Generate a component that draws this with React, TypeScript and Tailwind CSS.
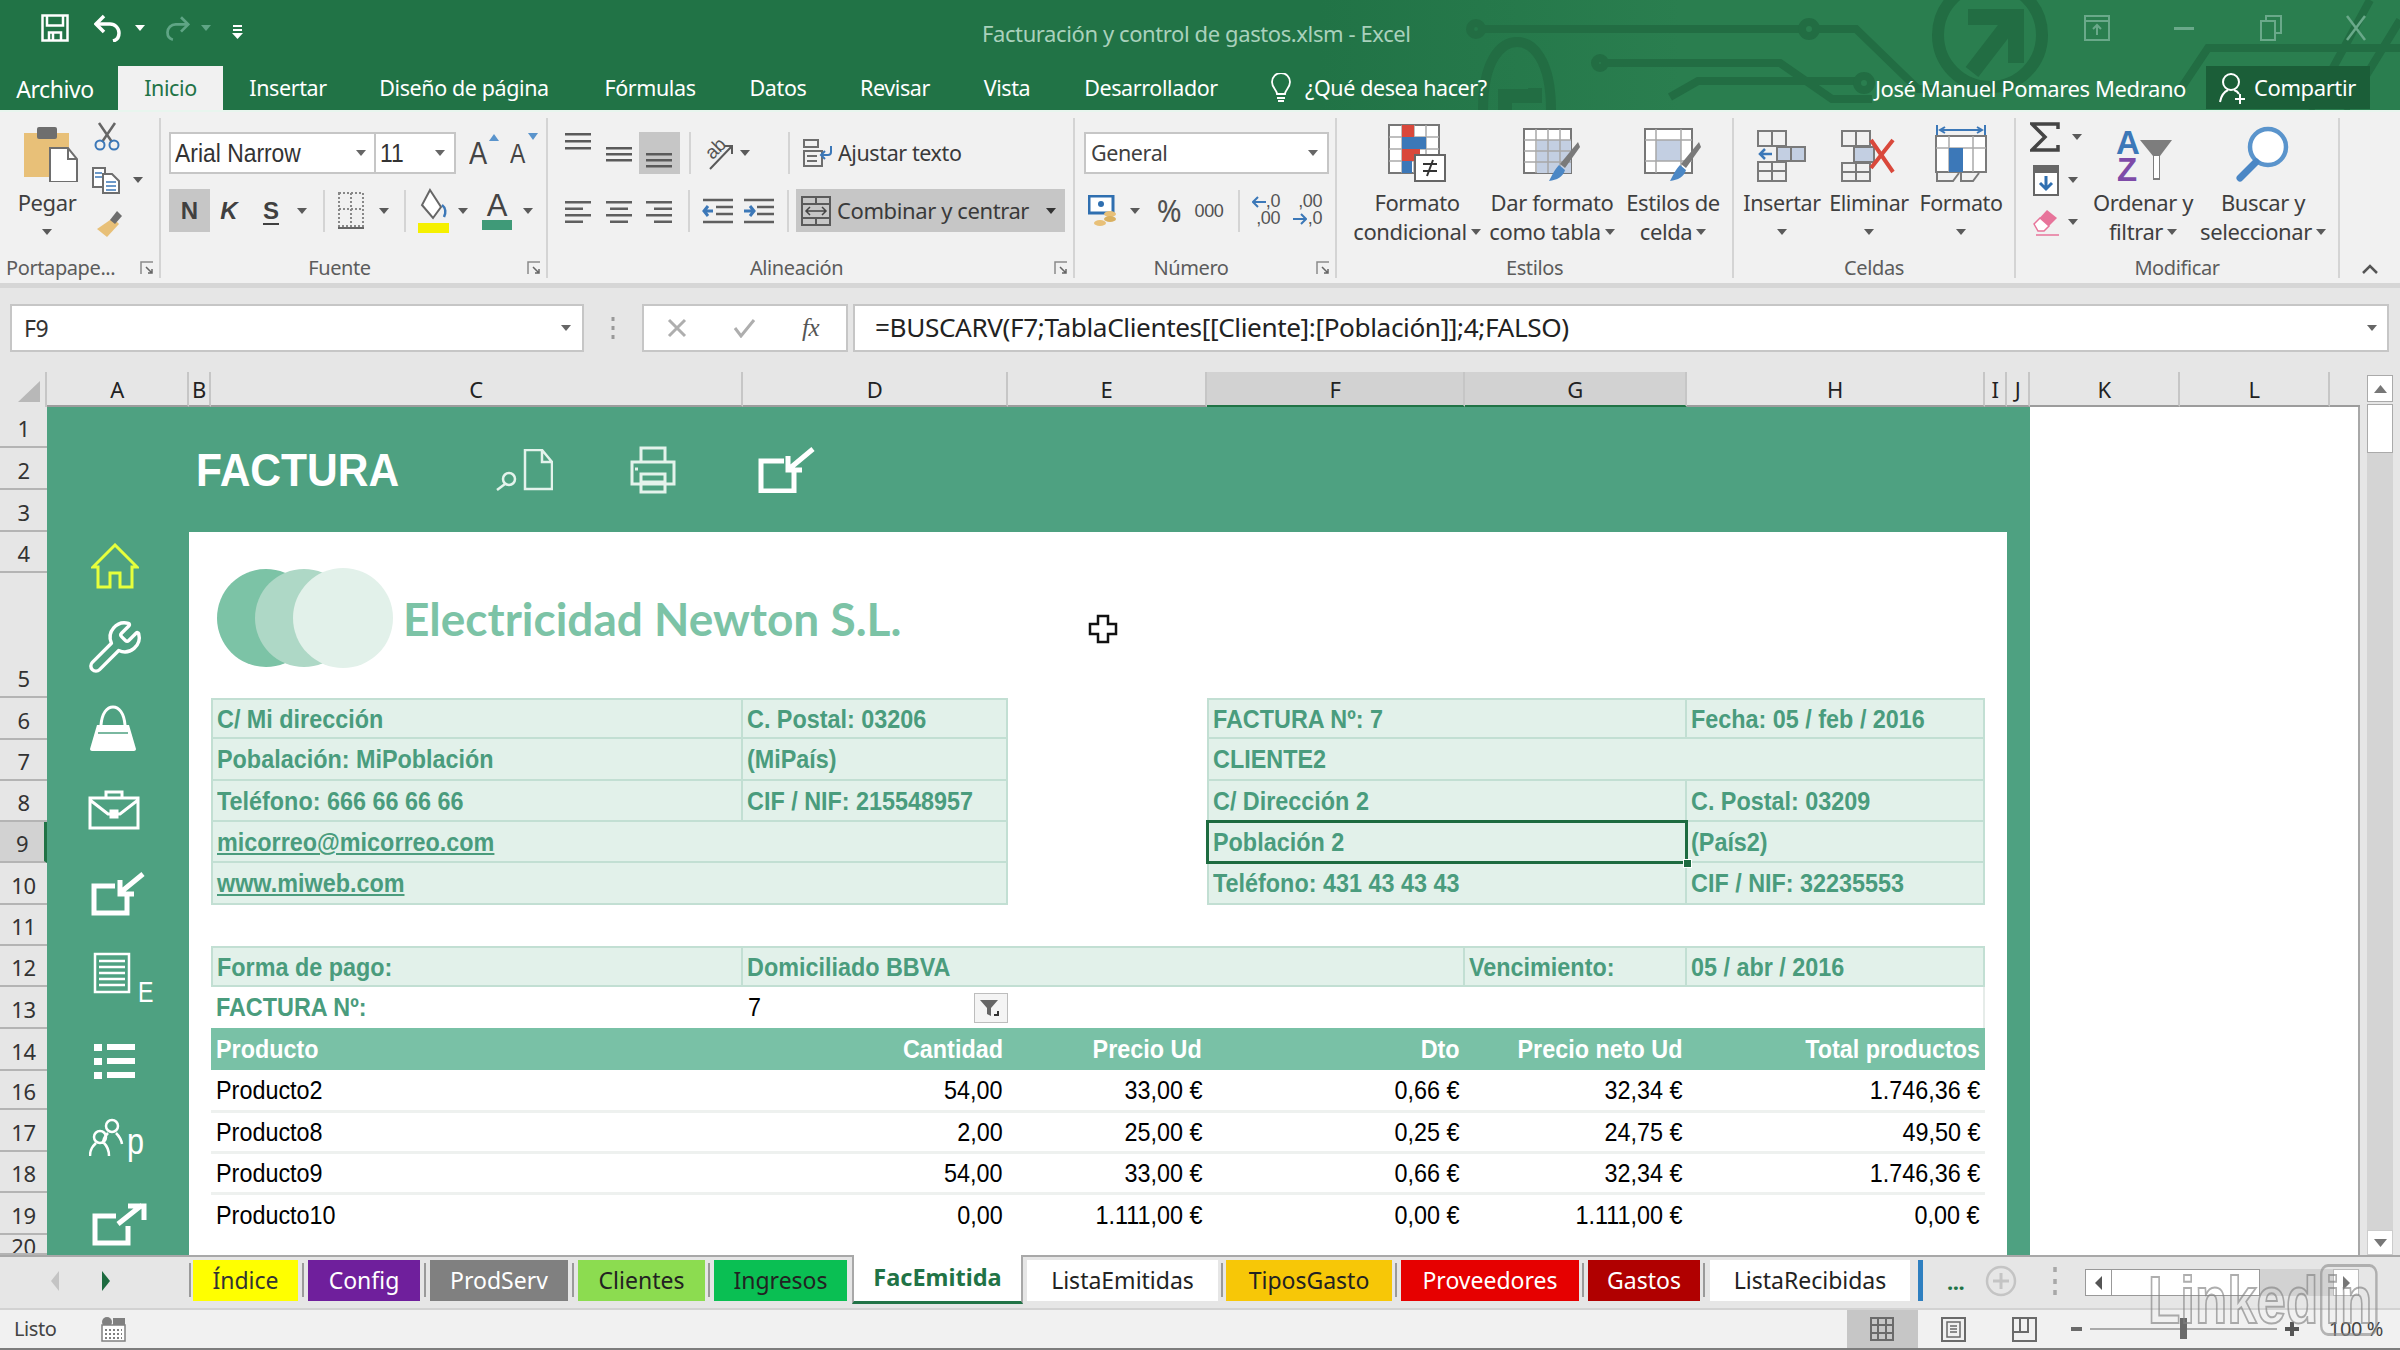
import React from "react";
import { Wrench } from "lucide-react";

const Caret = ({ c = "#5a5a5a", className = "" }: { c?: string; className?: string }) => (
  <svg width="10" height="6" viewBox="0 0 10 6" className={"shrink-0 " + className}><path d="M0 0h10L5 6z" fill={c} /></svg>
);
const Launcher = () => (
  <svg width="14" height="14" viewBox="0 0 14 14" className="shrink-0"><path d="M1 13V1h12" fill="none" stroke="#8a8a8a" strokeWidth="1.5" /><path d="M6 6l6 6M12 8v4H8" fill="none" stroke="#666" strokeWidth="1.5" /></svg>
);
const Sep = ({ className = "" }: { className?: string }) => <div className={"w-[2px] h-[42px] bg-[#d4d4d4] shrink-0 " + className} />;

const N = ({ children }: { children: React.ReactNode }) => <span className="inline-block whitespace-nowrap origin-left scale-x-[0.935]">{children}</span>;
const R = ({ children }: { children: React.ReactNode }) => <span className="inline-block whitespace-nowrap origin-right scale-x-[0.935]">{children}</span>;

const Lines = ({ w, y }: { w: number[]; y: number[] }) => (
  <svg width="28" height="30" viewBox="0 0 28 30" className="shrink-0">
    {w.map((x, i) => (<rect key={i} x={(26 - x) / 2} y={y[i]} width={x} height="2.5" fill="#5a5a5a" />))}
  </svg>
);

function AlignIcon({ kind }: { kind: "l" | "c" | "r" }) {
  const a = kind === "l" ? [0, 0, 0, 0] : kind === "c" ? [0, 4, 0, 4] : [0, 8, 0, 8];
  const ws = [26, 18, 26, 18];
  return (
    <svg width="27" height="24" viewBox="0 0 27 24" className="shrink-0">
      {ws.map((x, i) => (<rect key={i} x={a[i]} y={2 + i * 6.5} width={x} height="2.5" fill="#5f5f5f" />))}
    </svg>
  );
}

function Big({ w, icon, l1, l2, caret }: { w: string; icon: React.ReactNode; l1: string; l2?: string; caret?: boolean }) {
  return (
    <div className={"flex flex-col items-center shrink-0 " + w}>
      <div className="h-[64px] flex items-end justify-center">{icon}</div>
      <div className="h-[29px] mt-[6px] leading-[29px] whitespace-nowrap">{l1}</div>
      <div className="h-[29px] leading-[29px] flex items-center gap-[4px] whitespace-nowrap">{l2}{caret && <Caret />}</div>
    </div>
  );
}

function Group({ w, label, launcher, children }: { w: string; label: string; launcher?: boolean; children: React.ReactNode }) {
  return (
    <div className={"flex flex-col shrink-0 border-r-2 border-[#d4d4d4] " + w}>
      <div className="flex-1 min-h-0">{children}</div>
      <div className="h-[20px] flex items-center text-[#5c5c5c] text-[20px]">
        <div className={"flex-1 whitespace-nowrap " + (label.startsWith("Porta") ? "pl-[6px]" : launcher ? "text-center pr-[9px]" : "text-center")}>{label}</div>
        {launcher && <div className="mr-[5px]"><Launcher /></div>}
      </div>
    </div>
  );
}

const CondIcon = () => (
  <svg width="58" height="58" viewBox="0 0 58 58">
    <rect x="1" y="1" width="50" height="48" fill="#fff" stroke="#777" strokeWidth="2" />
    <path d="M1 13h50M1 25h50M1 37h50M14 1v48M26 1v48M38 1v48" stroke="#aaa" strokeWidth="1.5" />
    <rect x="14" y="1" width="12" height="12" fill="#d9483b" /><rect x="14" y="13" width="24" height="12" fill="#3c78b8" />
    <rect x="14" y="25" width="18" height="12" fill="#d9483b" /><rect x="14" y="37" width="10" height="12" fill="#3c78b8" />
    <rect x="27" y="31" width="30" height="26" fill="#fff" stroke="#666" strokeWidth="2" />
    <path d="M35 40h14M35 47h14M45 36l-6 16" stroke="#333" strokeWidth="2" fill="none" />
  </svg>
);
const TableIcon = () => (
  <svg width="58" height="54" viewBox="0 0 58 54">
    <rect x="1" y="1" width="47" height="44" fill="#fff" stroke="#777" strokeWidth="2" />
    <rect x="14" y="12" width="34" height="33" fill="#c3cfe2" />
    <path d="M1 12h47M1 23h47M1 34h47M13 1v44M25 1v44M37 1v44" stroke="#a8a8a8" strokeWidth="1.5" />
    <path d="M55 14l2 5-15 21-5-4z" fill="#7a7a7a" /><path d="M36 37l6 5c-2 7-8 10-16 11 3-5 5-11 10-16z" fill="#4b87c5" />
  </svg>
);
const StyleIcon = () => (
  <svg width="58" height="54" viewBox="0 0 58 54">
    <rect x="1" y="1" width="47" height="44" fill="#fff" stroke="#777" strokeWidth="2" />
    <rect x="12" y="12" width="25" height="21" fill="#c3cfe2" />
    <path d="M1 12h47M1 33h47M12 1v44M37 1v44" stroke="#a8a8a8" strokeWidth="1.5" />
    <path d="M55 14l2 5-15 21-5-4z" fill="#7a7a7a" /><path d="M36 37l6 5c-2 7-8 10-16 11 3-5 5-11 10-16z" fill="#4b87c5" />
  </svg>
);
const InsIcon = () => (
  <svg width="50" height="52" viewBox="0 0 50 52" fill="none">
    <path d="M1 1h28v15H1zM15 1v15" stroke="#7a7a7a" strokeWidth="2" />
    <path d="M1 32h28v19H1zM15 32v19M1 41h28" stroke="#7a7a7a" strokeWidth="2" />
    <rect x="20" y="17" width="28" height="14" fill="#c3cfe2" stroke="#7a7a7a" strokeWidth="2" /><path d="M34 17v14" stroke="#7a7a7a" strokeWidth="2" />
    <path d="M15 24H3M8 19l-5 5 5 5" stroke="#3c78b8" strokeWidth="2.5" />
  </svg>
);
const DelIcon = () => (
  <svg width="56" height="52" viewBox="0 0 56 52" fill="none">
    <path d="M1 1h28v15H1zM15 1v15" stroke="#7a7a7a" strokeWidth="2" />
    <path d="M1 33h28v18H1zM15 33v18M1 42h28" stroke="#7a7a7a" strokeWidth="2" />
    <rect x="13" y="17" width="20" height="15" fill="#c3cfe2" stroke="#7a7a7a" strokeWidth="2" />
    <path d="M30 10l22 32M52 10L30 38" stroke="#d9483b" strokeWidth="4" />
  </svg>
);
const FmtIcon = () => (
  <svg width="52" height="58" viewBox="0 0 52 58" fill="none">
    <path d="M2 1v10M50 1v10M6 6h40M10 3L5 6l5 3M42 3l5 3-5 3" stroke="#3c78b8" strokeWidth="2" />
    <rect x="1" y="12" width="50" height="36" fill="#fff" stroke="#7a7a7a" strokeWidth="2" />
    <path d="M1 24h50M14 12v36M38 12v36" stroke="#aaa" strokeWidth="1.5" />
    <rect x="14" y="24" width="14" height="24" fill="#3c78b8" />
    <path d="M2 49l0 8h16l6-8M26 49l0 8h12l6-8" stroke="#7a7a7a" strokeWidth="2" />
  </svg>
);
const SortIcon = () => (
  <div className="relative w-[58px] h-[52px] font-['Liberation_Sans',sans-serif] font-bold">
    <span className="absolute left-[2px] -top-[6px] text-[#3c78b8] text-[33px] leading-[38px]">A</span>
    <span className="absolute left-[3px] top-[23px] text-[#7e4ba8] text-[33px] leading-[34px]">Z</span>
    <svg width="32" height="42" viewBox="0 0 32 42" className="absolute right-0 top-[10px]"><path d="M0 0h32L20 16v24h-7V16z" fill="#7d7d7d" /><path d="M14 16h5v22h-5z" fill="#fff" /></svg>
  </div>
);
const FindIcon = () => (
  <svg width="54" height="56" viewBox="0 0 54 56" fill="none">
    <circle cx="32" cy="21" r="18" fill="#fff" stroke="#5a94cc" strokeWidth="4.5" />
    <path d="M20 36L4 52" stroke="#4b87c5" strokeWidth="7" strokeLinecap="round" />
  </svg>
);

function Ribbon() {
  return (
    <div className="h-[178px] shrink-0 bg-[#f1f1f1] border-b-[5px] border-[#d6d6d6] border-t-2 border-t-[#e8f5ee] pt-[6px] pb-[5px] flex text-[#3f3f3f] text-[22px]">
      <Group w="w-[161px]" label="Portapape..." launcher>
        <div className="flex pl-[14px]">
          <div className="w-[66px] flex flex-col items-center">
            <div className="h-[64px] flex items-end pl-[8px]">
              <svg width="54" height="57" viewBox="0 0 54 57"><rect x="0" y="8" width="45" height="44" fill="#e8c078" /><rect x="13" y="2" width="20" height="12" rx="2" fill="#6e6e6e" /><path d="M26 23h18l9 11v23H26z" fill="#fff" stroke="#6e6e6e" strokeWidth="2" /><path d="M44 23v11h9" fill="none" stroke="#6e6e6e" strokeWidth="2" /></svg>
            </div>
            <div className="h-[29px] mt-[6px] leading-[29px]">Pegar</div>
            <Caret className="mt-[12px]" />
          </div>
          <div className="ml-[12px] flex flex-col">
            <div className="mt-[4px] h-[28px] pl-[2px]">
              <svg width="26" height="29" viewBox="0 0 26 29" fill="none"><path d="M5 1l13 19M21 1L8 20" stroke="#666" strokeWidth="2.5" /><circle cx="6" cy="23" r="4.5" stroke="#3c78b8" strokeWidth="2" /><circle cx="20" cy="23" r="4.5" stroke="#3c78b8" strokeWidth="2" /></svg>
            </div>
            <div className="mt-[17px] h-[26px] flex items-center">
              <svg width="28" height="27" viewBox="0 0 28 27" fill="none"><path d="M1 1h12v19H1z" fill="#fff" stroke="#6e6e6e" strokeWidth="2" /><path d="M11 7h9l7 7v12H11z" fill="#fff" stroke="#6e6e6e" strokeWidth="2" /><path d="M14 15h10M14 19h10M14 23h10M3 6h7M3 10h7" stroke="#3c78b8" strokeWidth="1.5" /></svg>
              <Caret className="ml-[13px]" />
            </div>
            <div className="mt-[17px] h-[26px]">
              <svg width="30" height="28" viewBox="0 0 30 28"><path d="M21 8l6 6-12 13-10-8z" fill="#e8c078" /><path d="M18 10l7-9 5 5-7 8z" fill="#6e6e6e" /></svg>
            </div>
          </div>
        </div>
      </Group>

      <Group w="w-[387px]" label="Fuente" launcher>
        <div className="pl-[8px] pt-[14px] font-['Liberation_Sans',sans-serif] tracking-normal">
          <div className="flex h-[42px] items-center text-[#333] text-[26px]">
            <div className="w-[207px] h-full bg-white border-2 border-[#c6c6c6] flex items-center pl-[4px] pr-[8px] justify-between"><span className="inline-block origin-left scale-x-[0.88] whitespace-nowrap">Arial Narrow</span><Caret c="#666" /></div>
            <div className="w-[80px] h-full bg-white border-2 border-l-0 border-[#c6c6c6] flex items-center pl-[4px] pr-[9px] justify-between"><span className="inline-block origin-left scale-x-[0.88]">11</span><Caret c="#666" /></div>
            <div className="ml-[13px] relative w-[30px] text-[32px] leading-none text-[#444]"><span className="inline-block origin-left scale-x-[0.85]">A</span><svg width="10" height="7" className="absolute right-0 -top-[3px]"><path d="M0 7h10L5 0z" fill="#5a94cc" /></svg></div>
            <div className="ml-[11px] relative w-[28px] text-[27px] leading-none text-[#444] pt-[3px]"><span className="inline-block origin-left scale-x-[0.85]">A</span><svg width="10" height="7" className="absolute right-0 -top-[5px]"><path d="M0 0h10L5 7z" fill="#5a94cc" /></svg></div>
          </div>
          <div className="flex h-[43px] items-center mt-[15px] text-[#404040]">
            <div className="w-[41px] h-full bg-[#c6c6c6] flex items-center justify-center font-bold text-[24px]">N</div>
            <div className="w-[38px] text-center font-bold italic text-[24px]">K</div>
            <div className="w-[46px] text-center font-bold text-[24px] underline underline-offset-4">S</div>
            <Caret className="ml-[3px]" />
            <Sep className="ml-[16px]" />
            <svg width="26" height="38" viewBox="0 0 26 38" className="ml-[13px]" fill="none"><rect x="1" y="1" width="24" height="33" stroke="#888" strokeWidth="2" strokeDasharray="2 2" /><path d="M13 1v33M1 17h24" stroke="#888" strokeWidth="2" strokeDasharray="2 2" /><path d="M0 36h26" stroke="#666" strokeWidth="2" /></svg>
            <Caret className="ml-[15px]" />
            <Sep className="ml-[15px]" />
            <svg width="31" height="46" viewBox="0 0 31 46" className="ml-[12px]" fill="none"><path d="M12 2l11 17-8 11L4 17z" fill="#fff" stroke="#666" strokeWidth="2" /><path d="M24 17c4 3 4 8 2 12" stroke="#3c78b8" strokeWidth="2.5" /><rect x="0" y="35" width="31" height="10" fill="#f5f000" /></svg>
            <Caret className="ml-[9px]" />
            <div className="ml-[14px] w-[30px] flex flex-col items-center">
              <span className="text-[31px] leading-[29px] text-[#444]">A</span>
              <div className="w-[30px] h-[10px] bg-[#3f9a78]" />
            </div>
            <Caret className="ml-[11px]" />
          </div>
        </div>
      </Group>

      <Group w="w-[527px]" label="Alineación" launcher>
        <div className="pl-[17px] pt-[14px]">
          <div className="flex h-[42px] items-center">
            <div className="w-[26px] h-full flex flex-col justify-start"><Lines w={[26, 26, 26]} y={[1, 8, 15]} /></div>
            <div className="ml-[15px] w-[27px] h-full flex items-center"><Lines w={[26, 26, 26]} y={[9, 15, 21]} /></div>
            <div className="ml-[6px] w-[41px] h-full bg-[#c6c6c6] flex items-end justify-center"><Lines w={[26, 26, 26]} y={[9, 15, 21]} /></div>
            <Sep className="ml-[9px]" />
            <div className="ml-[13px] w-[31px] h-[34px] relative shrink-0 overflow-visible text-[#555] text-[19px] leading-none">
              <span className="absolute left-[1px] top-[3px] -rotate-45 font-['Liberation_Sans',sans-serif]">ab</span>
              <svg width="31" height="34" viewBox="0 0 31 34" className="absolute inset-0" fill="none"><path d="M6 33L28 10M20 10h8v8" stroke="#5a5a5a" strokeWidth="2" /></svg>
            </div>
            <Caret className="ml-[5px]" />
            <Sep className="ml-[38px]" />
            <svg width="30" height="30" viewBox="0 0 30 30" className="ml-[12px]" fill="none"><path d="M2 2h14v7H2zM2 13h18v15H2zM5 18h10M5 23h10" stroke="#6e6e6e" strokeWidth="2" /><path d="M29 8v6a3 3 0 01-3 3h-7M23 13l-4 4 4 4" stroke="#3c78b8" strokeWidth="2" /></svg>
            <span className="ml-[6px] whitespace-nowrap text-[21.5px] text-[#3a3a3a]">Ajustar texto</span>
          </div>
          <div className="flex h-[43px] items-center mt-[15px]">
            <AlignIcon kind="l" />
            <div className="ml-[14px]"><AlignIcon kind="c" /></div>
            <div className="ml-[13px]"><AlignIcon kind="r" /></div>
            <Sep className="ml-[15px]" />
            <svg width="31" height="26" viewBox="0 0 31 26" className="ml-[12px]" fill="none"><path d="M1 2h30M14 9h17M14 16h17M1 24h30" stroke="#5f5f5f" strokeWidth="2.5" /><path d="M11 13H2M6 8l-4 5 4 5" stroke="#3c78b8" strokeWidth="3" /></svg>
            <svg width="31" height="26" viewBox="0 0 31 26" className="ml-[10px]" fill="none"><path d="M1 2h30M14 9h17M14 16h17M1 24h30" stroke="#5f5f5f" strokeWidth="2.5" /><path d="M1 13h10M7 8l4 5-4 5" stroke="#3c78b8" strokeWidth="3" /></svg>
            <Sep className="ml-[13px]" />
            <div className="ml-[7px] w-[269px] h-full bg-[#c6c6c6] flex items-center pl-[5px] pr-[9px]">
              <svg width="30" height="30" viewBox="0 0 30 30" fill="none"><rect x="1" y="1" width="28" height="28" stroke="#5a5a5a" strokeWidth="2" /><path d="M1 8h28M1 22h28M15 1v7M15 22v7" stroke="#5a5a5a" strokeWidth="2" /><path d="M5 15h20M9 11l-4 4 4 4M21 11l4 4-4 4" stroke="#444" strokeWidth="1.5" /></svg>
              <span className="ml-[6px] flex-1 whitespace-nowrap text-[22px] text-[#3a3a3a]">Combinar y centrar</span>
              <Caret c="#333" />
            </div>
          </div>
        </div>
      </Group>

      <Group w="w-[262px]" label="Número" launcher>
        <div className="pl-[9px] pt-[14px]">
          <div className="w-[245px] h-[42px] bg-white border-2 border-[#c6c6c6] flex items-center justify-between pl-[5px] pr-[9px] text-[21.5px]">General<Caret c="#666" /></div>
          <div className="flex h-[43px] items-center mt-[15px]">
            <svg width="32" height="32" viewBox="0 0 32 32" className="ml-[4px]" fill="none"><rect x="1" y="1" width="24" height="17" fill="#fff" stroke="#2f6fb0" strokeWidth="3" /><circle cx="13" cy="9" r="3" fill="#2f6fb0" /><ellipse cx="22" cy="19" rx="6" ry="3" fill="#e8c078" /><ellipse cx="22" cy="24" rx="6" ry="3" fill="#d9b060" /><ellipse cx="12" cy="28" rx="6" ry="3" fill="#e8c078" /></svg>
            <Caret className="ml-[10px]" />
            <div className="ml-[14px] w-[30px] text-center text-[30px] leading-none text-[#505050]">%</div>
            <div className="ml-[10px] w-[30px] text-center text-[18px] leading-none text-[#505050] font-['Liberation_Sans',sans-serif]">000</div>
            <Sep className="ml-[14px]" />
            <div className="ml-[12px] w-[28px] relative h-[36px] text-[18px] leading-[17px] text-[#555] text-right font-['Liberation_Sans',sans-serif]">,0<br />,00<svg width="14" height="12" viewBox="0 0 14 12" className="absolute left-0 top-[3px]" fill="none"><path d="M14 6H2M6 1L1 6l5 5" stroke="#3c78b8" strokeWidth="2" /></svg></div>
            <div className="ml-[13px] w-[29px] relative h-[36px] text-[18px] leading-[17px] text-[#555] text-right font-['Liberation_Sans',sans-serif]">,00<br />,0<svg width="14" height="12" viewBox="0 0 14 12" className="absolute left-0 top-[20px]" fill="none"><path d="M0 6h12M8 1l5 5-5 5" stroke="#3c78b8" strokeWidth="2" /></svg></div>
          </div>
        </div>
      </Group>

      <Group w="w-[397px]" label="Estilos">
        <div className="flex pl-[4px]">
          <Big w="w-[152px]" icon={<CondIcon />} l1="Formato" l2="condicional" caret />
          <Big w="w-[118px]" icon={<TableIcon />} l1="Dar formato" l2="como tabla" caret />
          <Big w="w-[124px]" icon={<StyleIcon />} l1="Estilos de" l2="celda" caret />
        </div>
      </Group>

      <Group w="w-[282px]" label="Celdas">
        <div className="flex pl-[2px] text-[21.5px]">
          <Big w="w-[92px]" icon={<InsIcon />} l1="Insertar" caret />
          <Big w="w-[82px]" icon={<DelIcon />} l1="Eliminar" caret />
          <Big w="w-[102px]" icon={<FmtIcon />} l1="Formato" caret />
        </div>
      </Group>

      <Group w="w-[324px]" label="Modificar">
        <div className="flex pl-[14px]">
          <div className="w-[62px] flex flex-col">
            <div className="h-[30px] mt-[4px] flex items-center">
              <svg width="30" height="30" viewBox="0 0 30 30" fill="none"><path d="M28 7V2H2l13 13L2 28h26v-5" stroke="#444" strokeWidth="3.5" /></svg>
              <Caret className="ml-[12px]" />
            </div>
            <div className="h-[30px] mt-[13px] flex items-center pl-[3px]">
              <svg width="26" height="31" viewBox="0 0 26 31" fill="none"><rect x="1" y="1" width="24" height="29" fill="#fff" stroke="#666" strokeWidth="2" /><rect x="1" y="1" width="24" height="7" fill="#666" /><path d="M13 11v13M7 18l6 6 6-6" stroke="#2f6fb0" strokeWidth="3" /></svg>
              <Caret className="ml-[9px]" />
            </div>
            <div className="h-[28px] mt-[13px] flex items-center pl-[3px]">
              <svg width="26" height="27" viewBox="0 0 26 27"><path d="M14 1l10 8L11 22 1 15z" fill="#e7749a" /><path d="M1 15l6-6 9 8-5 5H5zM3 26h23" fill="#fff" stroke="#e7749a" strokeWidth="1.5" /></svg>
              <Caret className="ml-[9px]" />
            </div>
          </div>
          <Big w="w-[102px]" icon={<SortIcon />} l1="Ordenar y" l2="filtrar" caret />
          <Big w="w-[138px]" icon={<FindIcon />} l1="Buscar y" l2="seleccionar" caret />
        </div>
      </Group>

      <div className="flex-1 flex items-end justify-center pb-[3px]">
        <svg width="18" height="11" viewBox="0 0 18 11" fill="none"><path d="M2 9l7-7 7 7" stroke="#555" strokeWidth="2.5" /></svg>
      </div>
    </div>
  );
}

const COLS: [string, string, boolean?][] = [
  ["A", "w-[142px]"], ["B", "w-[22px]"], ["C", "w-[532px]"], ["D", "w-[265px]"], ["E", "w-[199px]"],
  ["F", "w-[258px]", true], ["G", "w-[222px]", true], ["H", "w-[298px]"], ["I", "w-[22px]"], ["J", "w-[23px]"], ["K", "w-[150px]"], ["L", "w-[150px]"],
];
const ROWS: [string, string][] = [
  ["1", "h-[41px]"], ["2", "h-[42px]"], ["3", "h-[42px]"], ["4", "h-[41px]"], ["5", "h-[125px]"], ["6", "h-[42px]"], ["7", "h-[41px]"],
  ["8", "h-[41px]"], ["9", "h-[41px]"], ["10", "h-[42px]"], ["11", "h-[41px]"], ["12", "h-[41px]"], ["13", "h-[42px]"], ["14", "h-[42px]"],
  ["16", "h-[39px]"], ["17", "h-[42px]"], ["18", "h-[41px]"], ["19", "h-[42px]"], ["20", "h-[20px]"],
];

const GRID = "grid grid-cols-[22px_532px_265px_199px_258px_222px_298px_22px]";
const CELL = "border-b-2 border-r-2 border-[#c2dfd3] bg-[#e2f1ea] flex items-center px-[4px] pt-[2px] whitespace-nowrap overflow-hidden";

function InfoRow({ children }: { children: React.ReactNode }) {
  return <div className={GRID + " h-[41.33px] text-[#4a9c7d] font-bold"}>{children}</div>;
}

function Data({ n, q, p, d, pn, t, last }: { n: string; q: string; p: string; d: string; pn: string; t: string; last?: boolean }) {
  return (
    <div className={GRID + " h-[41.33px]"}>
      <div className={"col-start-2 col-span-6 grid grid-cols-[532px_265px_199px_258px_222px_298px] items-center pt-[2px] text-black " + (last ? "" : "border-b-[3px] border-[#eef1ef]")}>
        <div className="pl-[5px]"><N>{n}</N></div>
        <div className="text-right pr-[5px]"><R>{q}</R></div>
        <div className="text-right pr-[5px]"><R>{p}</R></div>
        <div className="text-right pr-[5px]"><R>{d}</R></div>
        <div className="text-right pr-[5px]"><R>{pn}</R></div>
        <div className="text-right pr-[5px]"><R>{t}</R></div>
      </div>
    </div>
  );
}

function SheetTab({ w, bg, fg, children }: { w: string; bg: string; fg: string; children: string }) {
  return <div className={"h-[41px] flex items-center justify-center shrink-0 text-[23px] tracking-normal " + w + " " + bg + " " + fg}>{children}</div>;
}
const TabSep = ({ className = "" }: { className?: string }) => <div className={"w-[2px] h-[34px] bg-[#9a9a9a] shrink-0 " + className} />;

export default function App() {
  return (
    <div className="w-[2400px] h-[1350px] flex flex-col overflow-hidden bg-[#e6e6e6] font-['Noto_Sans',sans-serif] tracking-[-0.4px] relative">
      {/* Title + tabs */}
      <div className="relative bg-[#217346] shrink-0">
        <svg width="2400" height="110" viewBox="0 0 2400 110" className="absolute inset-0" fill="none">
          <defs><linearGradient id="gl" x1="0" x2="1"><stop offset="0.55" stopColor="#217346" /><stop offset="0.7" stopColor="#2a7e4f" /><stop offset="1" stopColor="#2a7e4f" /></linearGradient></defs>
          <rect width="2400" height="110" fill="url(#gl)" />
          <g stroke="#226d43" strokeWidth="8">
            <circle cx="1476" cy="29" r="6" /><path d="M1482 29h320" /><circle cx="1809" cy="29" r="7" /><path d="M1816 29h40l62 60h30" />
            <path d="M1483 110c0-50 18-68 34-68s34 18 34 68" strokeWidth="10" />
            <path d="M1505 110v-14h30v-8" strokeWidth="14" />
            <circle cx="1600" cy="63" r="5" /><path d="M1606 63h174l52 36h40" />
            <path d="M1670 97l28-16h160" /><circle cx="1864" cy="83" r="7" />
            <circle cx="1990" cy="35" r="52" strokeWidth="12" />
            <path d="M1972 72l40-52M1968 17h48v46" strokeWidth="16" />
            <path d="M2176 96l32-48h192M2310 110l60-110M2345 110l55-90" />
          </g>
        </svg>
        <div className="relative h-[66px] flex items-center pb-[10px]">
          <svg width="28" height="28" viewBox="0 0 28 28" className="ml-[41px]" fill="none"><path d="M1.5 1.5h25v25h-25zM6 1.5v10h16v-10M8 26.5v-8h12v8M12 19v7" stroke="#fff" strokeWidth="2.5" /></svg>
          <svg width="30" height="28" viewBox="0 0 30 28" className="ml-[25px]" fill="none"><path d="M10 2L2 10l8 8" stroke="#fff" strokeWidth="3.5" /><path d="M2 10h14a9 9 0 019 9c0 4-2 7-6 8" stroke="#fff" strokeWidth="3.5" /></svg>
          <Caret c="#fff" className="ml-[11px]" />
          <svg width="27" height="28" viewBox="0 0 30 28" className="ml-[18px]" fill="none"><path d="M20 2l8 8-8 8" stroke="#5fa585" strokeWidth="3" /><path d="M28 10H14a9 9 0 00-9 9c0 4 2 7 6 8" stroke="#5fa585" strokeWidth="3" /></svg>
          <Caret c="#5fa585" className="ml-[11px]" />
          <svg width="11" height="15" viewBox="0 0 11 15" className="ml-[21px] mt-[8px]"><path d="M1 1h9M1 5h9" stroke="#fff" strokeWidth="2" /><path d="M0 8h11l-5.5 6z" fill="#fff" /></svg>
          <div className="absolute left-[982px] top-[17px] text-[#a9d1bc] text-[22px] whitespace-nowrap">Facturación y control de gastos.xlsm - Excel</div>
          <div className="ml-auto mr-[33px] flex items-center">
            <svg width="26" height="26" viewBox="0 0 26 26" fill="none"><rect x="1" y="1" width="24" height="24" stroke="#6aa98a" strokeWidth="2" /><path d="M1 6h24M13 20v-9M9 14l4-4 4 4" stroke="#6aa98a" strokeWidth="2" /></svg>
            <div className="w-[20px] h-[3px] bg-[#6aa98a] ml-[64px]" />
            <svg width="22" height="26" viewBox="0 0 22 26" className="ml-[66px]" fill="none"><path d="M1 6h14v19H1zM6 6V1h15v17h-6" stroke="#6aa98a" strokeWidth="2" /></svg>
            <svg width="22" height="28" viewBox="0 0 22 28" className="ml-[63px]" fill="none"><path d="M2 2l18 24M20 2L2 26" stroke="#6aa98a" strokeWidth="2.5" /></svg>
          </div>
        </div>
        <div className="relative h-[44px] flex items-stretch text-white text-[21.5px] whitespace-nowrap">
          <div className="w-[118px] pr-[8px] flex items-center justify-center pt-[3px] text-[23px]">Archivo</div>
          <div className="w-[105px] bg-[#f1f1f1] text-[#217346] flex items-center justify-center">Inicio</div>
          <div className="w-[130px] flex items-center justify-center">Insertar</div>
          <div className="w-[222px] flex items-center justify-center">Diseño de página</div>
          <div className="w-[150px] flex items-center justify-center">Fórmulas</div>
          <div className="w-[106px] flex items-center justify-center">Datos</div>
          <div className="w-[128px] flex items-center justify-center">Revisar</div>
          <div className="w-[96px] flex items-center justify-center">Vista</div>
          <div className="w-[192px] flex items-center justify-center">Desarrollador</div>
          <div className="ml-[23px] flex items-center">
            <svg width="22" height="30" viewBox="0 0 22 30" fill="none"><path d="M7 21c0-4-5-6-5-12a9 9 0 0118 0c0 6-5 8-5 12z" stroke="#fff" strokeWidth="1.8" /><path d="M7 25h8M8 28h6" stroke="#fff" strokeWidth="1.8" /></svg>
            <span className="ml-[13px]">¿Qué desea hacer?</span>
          </div>
          <div className="ml-auto flex items-center text-[22px]">José Manuel Pomares Medrano</div>
          <div className="ml-[20px] mr-[30px] w-[164px] bg-[#1b5e38] flex items-center pl-[12px] mb-[1px] text-[22px]">
            <svg width="28" height="32" viewBox="0 0 28 32" fill="none"><circle cx="13" cy="10" r="8" stroke="#fff" strokeWidth="2" /><path d="M2 30c1-6 4-10 8-12M16 18c3 1 4 2 5 4M17 27h10M22 22v10" stroke="#fff" strokeWidth="2" /></svg>
            <span className="ml-[8px]">Compartir</span>
          </div>
        </div>
      </div>

      <Ribbon />

      {/* Formula bar */}
      <div className="h-[84px] shrink-0 pt-[16px] flex items-start text-[#333]">
        <div className="ml-[10px] w-[574px] h-[48px] bg-white border-2 border-[#c6c6c6] flex items-center justify-between pl-[12px] pr-[11px] text-[23px]">F9<Caret c="#666" /></div>
        <div className="w-[58px] h-[48px] flex items-center justify-center">
          <svg width="4" height="22" viewBox="0 0 4 22"><path d="M2 0v4M2 9v4M2 18v4" stroke="#999" strokeWidth="3" /></svg>
        </div>
        <div className="w-[206px] h-[48px] bg-white border-2 border-[#c6c6c6] flex items-center">
          <svg width="20" height="20" viewBox="0 0 20 20" className="ml-[23px]" fill="none"><path d="M2 2l16 16M18 2L2 18" stroke="#aeaeae" strokeWidth="3" /></svg>
          <svg width="24" height="20" viewBox="0 0 24 20" className="ml-[45px]" fill="none"><path d="M3 10l6 8L22 2" stroke="#aeaeae" strokeWidth="3" /></svg>
          <span className="ml-[46px] italic text-[25px] font-['Liberation_Serif',serif] text-[#555]">fx</span>
        </div>
        <div className="ml-[5px] w-[1536px] h-[48px] bg-white border-2 border-[#c6c6c6] flex items-center justify-between pl-[20px] pr-[10px] text-[26.2px] text-[#222] whitespace-nowrap">=BUSCARV(F7;TablaClientes[[Cliente]:[Población]];4;FALSO)<Caret c="#666" /></div>
      </div>

      {/* Sheet + vertical scroll bar */}
      <div className="h-[883px] shrink-0 flex">
        <div className="w-[2367px] shrink-0 flex flex-col">
          {/* Column headers */}
          <div className="h-[35px] shrink-0 flex text-[22px] text-[#222]">
            <div className="w-[47px] flex items-end justify-end pr-[5px] pb-[5px] border-r-2 border-[#c6c6c6]">
              <svg width="22" height="21" viewBox="0 0 22 21"><path d="M22 0v21H0z" fill="#b8b8b8" /></svg>
            </div>
            {COLS.map(([l, w, active]) => (
              <div key={l} className={"flex items-center justify-center pt-[1px] border-r-2 border-[#c6c6c6] border-b-2 " + w + " " + (active ? "bg-[#d2d2d2] border-b-[#217346]" : "border-b-[#9c9c9c]")}>{l}</div>
            ))}
            <div className="w-[30px] border-b-2 border-[#9c9c9c]" />
          </div>

          {/* Sheet body */}
          <div className="h-[848px] shrink-0 flex">
            <div className="w-[47px] shrink-0 flex flex-col text-[22px] text-[#333]">
              {ROWS.map(([n, h]) => (
                <div key={n} className={"relative flex justify-center border-b-2 border-[#b4b4b4] shrink-0 overflow-hidden " + h + " " + (n === "5" ? "items-end pb-[1px]" : "items-center pt-[4px]") + " " + (n === "9" ? "bg-[#d2d2d2] border-r-[3px] border-r-[#217346]" : "")}>{n}</div>
              ))}
            </div>

            <div className="w-[1983px] shrink-0 bg-[#4ea181] flex flex-col">
              <div className="h-[125px] shrink-0 flex items-center pl-[149px]">
                <span className="text-white font-bold text-[47px] font-['Liberation_Sans',sans-serif] tracking-normal leading-none inline-block origin-left scale-x-[0.905]">FACTURA</span>
                <svg width="58" height="42" viewBox="0 0 58 42" className="ml-[74px]" fill="none" stroke="#e4f3ec" strokeWidth="2.5"><path d="M30 1h17l10 12v27H30zM47 1v12h10" /><circle cx="14" cy="30" r="6" /><path d="M10 35l-8 6" /></svg>
                <svg width="48" height="48" viewBox="0 0 48 48" className="ml-[76px]" fill="none" stroke="#e4f3ec" strokeWidth="3"><path d="M12 16V2h24v14M3 16h42v22H3zM12 28h24v18H12zM6 23h3M12 36h24" /></svg>
                <svg width="58" height="46" viewBox="0 0 58 46" className="ml-[81px]" fill="none" stroke="#fff" strokeWidth="5"><path d="M26 14H3v30h33V24" /><path d="M55 2L31 22M30 9v14h14" /></svg>
              </div>
              <div className="h-[723px] flex">
                {/* Side nav */}
                <div className="w-[142px] shrink-0 flex flex-col items-start overflow-hidden">
                  <div className="h-[73px] shrink-0 pl-[44px] pt-[11px]">
                    <svg width="48" height="46" viewBox="0 0 48 46" fill="none" stroke="#e6ff3c" strokeWidth="3"><path d="M24 2L2 24h5v20h12V30h10v14h12V24h5z" /></svg>
                  </div>
                  <div className="h-[81px] shrink-0 pl-[39px] pt-[13px]"><Wrench size={58} color="#fff" strokeWidth={1.4} /></div>
                  <div className="h-[82px] shrink-0 pl-[42px] pt-[19px]">
                    <svg width="48" height="46" viewBox="0 0 48 46"><path d="M12 20C13 8 18 2 24 2s11 6 12 18" fill="none" stroke="#fff" strokeWidth="3" /><path d="M8 20h32l7 24c0 1-1 2-2 2H3c-1 0-2-1-2-2z" fill="#fff" /><path d="M9 28h30" stroke="#4ea181" strokeWidth="1.5" /></svg>
                  </div>
                  <div className="h-[82px] shrink-0 pl-[41px] pt-[22px]">
                    <svg width="52" height="40" viewBox="0 0 52 40" fill="none" stroke="#fff" strokeWidth="3"><path d="M2 8h48v30H2zM18 8V2h16v6M2 10l18 14h12l18-14M23 21h6v6h-6z" /></svg>
                  </div>
                  <div className="h-[86px] shrink-0 pl-[44px] pt-[22px]">
                    <svg width="56" height="44" viewBox="0 0 56 44" fill="none" stroke="#fff" strokeWidth="5"><path d="M24 14H3v27h33V24" /><path d="M52 2L30 20M29 8v14h14" /></svg>
                  </div>
                  <div className="h-[84px] shrink-0 pl-[46px] pt-[16px] flex items-start">
                    <svg width="38" height="42" viewBox="0 0 38 42" fill="none" stroke="#fff" strokeWidth="2.5"><path d="M2 2h34v38H2zM6 9h26M6 15h26M6 21h26M6 27h26M6 33h26" /></svg>
                    <span className="text-white text-[29px] ml-[7px] mt-[26px] leading-none font-['Liberation_Sans',sans-serif] inline-block origin-left scale-x-[0.8]">E</span>
                  </div>
                  <div className="h-[80px] shrink-0 pl-[47px] pt-[23px]">
                    <svg width="41" height="36" viewBox="0 0 41 36" fill="#fff"><rect x="0" y="1" width="8" height="7" /><rect x="13" y="1" width="28" height="6" /><rect x="0" y="15" width="8" height="7" /><rect x="13" y="15" width="28" height="6" /><rect x="0" y="29" width="8" height="7" /><rect x="13" y="29" width="28" height="6" /></svg>
                  </div>
                  <div className="h-[82px] shrink-0 pl-[42px] pt-[18px] flex items-start">
                    <svg width="36" height="40" viewBox="0 0 36 40" fill="none" stroke="#fff" strokeWidth="2.5"><circle cx="23" cy="8" r="6" /><path d="M14 26c0-6 3-9 5-11M27 15c2 2 5 5 6 11" /><circle cx="11" cy="19" r="6" /><path d="M1 38c0-7 3-10 6-13M15 25c3 3 5 6 5 13" /></svg>
                    <span className="text-white text-[36px] leading-none mt-[6px] ml-[2px] font-['Liberation_Sans',sans-serif] inline-block origin-left scale-x-[0.85]">p</span>
                  </div>
                  <div className="h-[73px] shrink-0 pl-[45px] pt-[20px]">
                    <svg width="56" height="44" viewBox="0 0 56 44" fill="none" stroke="#fff" strokeWidth="5"><path d="M24 14H3v27h33V24" /><path d="M26 22L50 3M36 4h16v14" /></svg>
                  </div>
                </div>

                {/* White invoice */}
                <div className="w-[1818px] shrink-0 bg-white overflow-hidden relative font-['Liberation_Sans',sans-serif] text-[25px] tracking-normal">
                  <div className="h-[166px] flex items-center pl-[28px] pt-[6px]">
                    <div className="flex items-center">
                      <div className="w-[98px] h-[98px] rounded-full bg-[#7cc3a6]" />
                      <div className="w-[98px] h-[98px] rounded-full bg-[#aed8c6] -ml-[60px]" />
                      <div className="w-[100px] h-[100px] rounded-full bg-[#e2f1ea] -ml-[60px]" />
                    </div>
                    <span className="ml-[10px] text-[#7cc3a6] font-bold text-[46px] leading-none font-['Lato',sans-serif] tracking-normal mb-[-1px]">Electricidad Newton S.L.</span>
                  </div>

                  <InfoRow>
                    <div className={"col-start-2 border-l-2 border-t-2 " + CELL}><N>C/ Mi dirección</N></div>
                    <div className={"border-t-2 " + CELL}><N>C. Postal: 03206</N></div>
                    <div className={"col-start-5 col-span-2 border-l-2 border-t-2 " + CELL}><N>FACTURA Nº: 7</N></div>
                    <div className={"border-t-2 " + CELL}><N>Fecha: 05 / feb / 2016</N></div>
                  </InfoRow>
                  <InfoRow>
                    <div className={"col-start-2 border-l-2 " + CELL}><N>Pobalación: MiPoblación</N></div>
                    <div className={CELL}><N>(MiPaís)</N></div>
                    <div className={"col-start-5 col-span-3 border-l-2 " + CELL}><N>CLIENTE2</N></div>
                  </InfoRow>
                  <InfoRow>
                    <div className={"col-start-2 border-l-2 " + CELL}><N>Teléfono: 666 66 66 66</N></div>
                    <div className={CELL}><N>CIF / NIF: 215548957</N></div>
                    <div className={"col-start-5 col-span-2 border-l-2 " + CELL}><N>C/ Dirección 2</N></div>
                    <div className={CELL}><N>C. Postal: 03209</N></div>
                  </InfoRow>
                  <InfoRow>
                    <div className={"col-start-2 col-span-2 border-l-2 " + CELL}><N><span className="underline">micorreo@micorreo.com</span></N></div>
                    <div className="col-start-5 col-span-2 relative">
                      <div className={"h-full border-l-2 " + CELL}><N>Población 2</N></div>
                      <div className="absolute -left-[1px] -top-[2px] -right-[1px] -bottom-[1px] border-[3px] border-[#1d6b40]" />
                      <div className="absolute -right-[5px] -bottom-[5px] w-[9px] h-[9px] bg-[#1d6b40] border border-white" />
                    </div>
                    <div className={CELL}><N>(País2)</N></div>
                  </InfoRow>
                  <InfoRow>
                    <div className={"col-start-2 col-span-2 border-l-2 " + CELL}><N><span className="underline">www.miweb.com</span></N></div>
                    <div className={"col-start-5 col-span-2 border-l-2 " + CELL}><N>Teléfono: 431 43 43 43</N></div>
                    <div className={CELL}><N>CIF / NIF: 32235553</N></div>
                  </InfoRow>
                  <div className="h-[41px]" />
                  <InfoRow>
                    <div className={"col-start-2 border-l-2 border-t-2 " + CELL}><N>Forma de pago:</N></div>
                    <div className={"col-span-3 border-t-2 " + CELL}><N>Domiciliado BBVA</N></div>
                    <div className={"border-t-2 " + CELL}><N>Vencimiento:</N></div>
                    <div className={"border-t-2 " + CELL}><N>05 / abr / 2016</N></div>
                  </InfoRow>
                  <InfoRow>
                    <div className="col-start-2 flex items-center pl-[5px]"><N>FACTURA Nº:</N></div>
                    <div className="flex items-center justify-between pl-[5px] pr-[0px] text-black font-normal"><N>7</N>
                      <div className="w-[34px] h-[30px] bg-[#f4f4f4] border border-[#bdbdbd] flex items-center justify-center">
                        <svg width="24" height="20" viewBox="0 0 24 20"><path d="M1 2h18l-7 8v8l-4-2v-6z" fill="#666" /><path d="M19 13v4h-4" fill="none" stroke="#333" strokeWidth="2" /></svg>
                      </div>
                    </div>
                    <div className="col-span-4 border-r-2 border-[#e6ece9]" />
                  </InfoRow>
                  <div className={GRID + " h-[42px] font-bold text-white"}>
                    <div className="col-start-2 col-span-6 bg-[#79c1a6] grid grid-cols-[532px_265px_199px_258px_222px_298px] items-center">
                      <div className="pl-[5px]"><N>Producto</N></div>
                      <div className="text-right pr-[5px]"><R>Cantidad</R></div>
                      <div className="text-right pr-[5px]"><R>Precio Ud</R></div>
                      <div className="text-right pr-[5px]"><R>Dto</R></div>
                      <div className="text-right pr-[5px]"><R>Precio neto Ud</R></div>
                      <div className="text-right pr-[5px]"><R>Total productos</R></div>
                    </div>
                  </div>
                  <Data n="Producto2" q="54,00" p="33,00 €" d="0,66 €" pn="32,34 €" t="1.746,36 €" />
                  <Data n="Producto8" q="2,00" p="25,00 €" d="0,25 €" pn="24,75 €" t="49,50 €" />
                  <Data n="Producto9" q="54,00" p="33,00 €" d="0,66 €" pn="32,34 €" t="1.746,36 €" />
                  <Data n="Producto10" q="0,00" p="1.111,00 €" d="0,00 €" pn="1.111,00 €" t="0,00 €" last />

                  {/* mouse cursor */}
                  <svg width="30" height="30" viewBox="0 0 30 30" className="absolute left-[899px] top-[82px]">
                    <path d="M10 2h10v8h8v10h-8v8H10v-8H2V10h8z" fill="#fff" stroke="#111" strokeWidth="2.5" />
                  </svg>
                </div>
                <div className="flex-1" />
              </div>
            </div>

            <div className="w-[330px] shrink-0 bg-white border-r-2 border-[#a8a8a8]" />
            <div className="w-[7px] shrink-0" />
          </div>
        </div>

        <div className="w-[26px] shrink-0 flex flex-col pt-[3px]">
          <div className="h-[27px] mb-[2px] bg-white border border-[#aaa] flex items-center justify-center">
            <svg width="13" height="8"><path d="M0 8h13L6.5 0z" fill="#777" /></svg>
          </div>
          <div className="flex-1 bg-[#d4d4d4] flex flex-col">
            <div className="h-[49px] bg-white border border-[#aaa]" />
            <div className="flex-1" />
            <div className="h-[25px] bg-white border border-[#ccc] flex items-center justify-center">
              <svg width="13" height="8"><path d="M0 0h13L6.5 8z" fill="#777" /></svg>
            </div>
          </div>
        </div>
      </div>

      {/* Sheet tabs */}
      <div className="h-[53px] shrink-0 flex items-start border-t-2 border-[#a8a8a8] pt-[3px]">
        <div className="w-[189px] h-[41px] shrink-0 flex items-center">
          <svg width="8" height="20" className="ml-[51px]"><path d="M8 0v20L0 10z" fill="#c4c4c4" /></svg>
          <svg width="8" height="20" className="ml-[43px]"><path d="M0 0v20L8 10z" fill="#1d6b40" /></svg>
        </div>
        <TabSep className="mt-[3px]" />
        <div className="ml-[2px]"><SheetTab w="w-[105px]" bg="bg-[#ffff00]" fg="text-[#333]">Índice</SheetTab></div>
        <TabSep className="ml-[4px] mt-[3px]" />
        <div className="ml-[4px]"><SheetTab w="w-[112px]" bg="bg-[#6f1f9c]" fg="text-white">Config</SheetTab></div>
        <TabSep className="ml-[4px] mt-[3px]" />
        <div className="ml-[4px]"><SheetTab w="w-[138px]" bg="bg-[#808080]" fg="text-white">ProdServ</SheetTab></div>
        <TabSep className="ml-[4px] mt-[3px]" />
        <div className="ml-[4px]"><SheetTab w="w-[127px]" bg="bg-[#8cdc50]" fg="text-[#222]">Clientes</SheetTab></div>
        <TabSep className="ml-[3px] mt-[3px]" />
        <div className="ml-[4px]"><SheetTab w="w-[133px]" bg="bg-[#0abf53]" fg="text-[#222]">Ingresos</SheetTab></div>
        <div className="ml-[5px] -mt-[5px] w-[171px] h-[49px] bg-white border-x-2 border-[#a8a8a8] border-b-[3px] border-b-[#217346] flex items-center justify-center font-bold text-[23.5px] tracking-normal text-[#217346] shrink-0">FacEmitida</div>
        <div className="ml-[4px]"><SheetTab w="w-[191px]" bg="bg-white" fg="text-[#222]">ListaEmitidas</SheetTab></div>
        <TabSep className="ml-[3px] mt-[3px]" />
        <div className="ml-[3px]"><SheetTab w="w-[166px]" bg="bg-[#f7c707]" fg="text-[#222]">TiposGasto</SheetTab></div>
        <TabSep className="ml-[3px] mt-[3px]" />
        <div className="ml-[4px]"><SheetTab w="w-[178px]" bg="bg-[#e60000]" fg="text-white">Proveedores</SheetTab></div>
        <TabSep className="ml-[3px] mt-[3px]" />
        <div className="ml-[4px]"><SheetTab w="w-[112px]" bg="bg-[#b00000]" fg="text-white">Gastos</SheetTab></div>
        <TabSep className="ml-[3px] mt-[3px]" />
        <div className="ml-[5px]"><SheetTab w="w-[200px]" bg="bg-white" fg="text-[#222]">ListaRecibidas</SheetTab></div>
        <div className="ml-[8px] w-[5px] h-[41px] bg-[#2e7fc0] shrink-0" />
        <div className="ml-[24px] h-[41px] flex items-center font-bold text-[22px] text-[#217346] leading-none">...</div>
        <svg width="32" height="32" viewBox="0 0 32 32" className="ml-[21px] mt-[5px] shrink-0" fill="none"><circle cx="16" cy="16" r="14" stroke="#c4c4c4" strokeWidth="2.5" /><path d="M16 8v16M8 16h16" stroke="#c4c4c4" strokeWidth="3" /></svg>
        <svg width="4" height="28" viewBox="0 0 4 28" className="ml-[36px] mt-[7px] shrink-0"><path d="M2 0v5M2 12v5M2 23v5" stroke="#a8a8a8" strokeWidth="3.5" /></svg>
        <div className="ml-[28px] mt-[9px] flex h-[27px] w-[274px] bg-[#d2d2d2] shrink-0">
          <div className="w-[27px] bg-white border border-[#999] flex items-center justify-center"><svg width="7" height="14"><path d="M7 0v14L0 7z" fill="#555" /></svg></div>
          <div className="w-[148px] bg-white border border-l-0 border-[#999]" />
          <div className="flex-1" />
          <div className="w-[26px] bg-white border border-[#bbb] flex items-center justify-center"><svg width="7" height="14"><path d="M0 0v14l7-7z" fill="#777" /></svg></div>
        </div>
      </div>

      {/* Status bar */}
      <div className="h-[42px] shrink-0 bg-[#f1f1f1] border-t-2 border-[#d2d2d2] border-b-2 border-b-[#7d7d7d] flex items-center text-[#444] text-[20px]">
        <span className="ml-[14px]">Listo</span>
        <svg width="25" height="26" viewBox="0 0 25 26" className="ml-[44px]" fill="none"><circle cx="6" cy="6" r="5" fill="#808080" /><rect x="1" y="9" width="23" height="16" stroke="#808080" strokeWidth="1.5" fill="#fff" /><path d="M4 14h17M4 18h17M4 22h17" stroke="#808080" strokeWidth="2" strokeDasharray="2 2" /><rect x="12" y="2" width="12" height="7" fill="#808080" /></svg>
        <div className="ml-auto flex items-stretch h-full">
          <div className="w-[71px] bg-[#c6c6c6] flex items-center justify-center">
            <svg width="24" height="24" viewBox="0 0 24 24" fill="none" stroke="#6a6a6a" strokeWidth="2"><rect x="1" y="1" width="22" height="22" /><path d="M8 1v22M16 1v22M1 8h22M1 16h22" /></svg>
          </div>
          <div className="w-[71px] flex items-center justify-center">
            <svg width="25" height="25" viewBox="0 0 25 25" fill="none" stroke="#6a6a6a" strokeWidth="2"><rect x="1" y="1" width="23" height="23" /><rect x="6" y="5" width="13" height="15" strokeWidth="1.5" /><path d="M9 9h7M9 12h7M9 15h7" strokeWidth="1.5" /></svg>
          </div>
          <div className="w-[71px] flex items-center justify-center">
            <svg width="25" height="25" viewBox="0 0 25 25" fill="none" stroke="#6a6a6a" strokeWidth="2"><rect x="1" y="1" width="23" height="23" /><path d="M1 15h15V1M8 1v14" /></svg>
          </div>
          <div className="ml-[11px] flex items-center">
            <div className="w-[11px] h-[4px] bg-[#6a6a6a]" />
            <div className="relative ml-[8px] w-[187px] h-[2px] bg-[#aaa]">
              <div className="absolute left-[90px] -top-[10px] w-[7px] h-[21px] bg-[#6a6a6a]" />
            </div>
            <div className="ml-[8px] relative w-[14px] h-[14px]"><div className="absolute left-0 top-[5px] w-[14px] h-[4px] bg-[#555]" /><div className="absolute left-[5px] top-0 w-[4px] h-[14px] bg-[#555]" /></div>
            <span className="ml-[30px] mr-[17px] whitespace-nowrap">100 %</span>
          </div>
        </div>
      </div>

      {/* LinkedIn watermark */}
      <div className="absolute left-[2148px] top-[1264px] flex items-center origin-left scale-x-[0.8] text-[66px] leading-none font-bold text-transparent font-['Liberation_Sans',sans-serif] tracking-normal whitespace-nowrap [-webkit-text-stroke:2px_rgba(130,130,130,0.65)]">
        <span>Linked</span>
        <span className="ml-[2px] border-[3px] border-[#8a8a8a]/60 rounded-[10px] px-[4px]">in</span>
      </div>
    </div>
  );
}
